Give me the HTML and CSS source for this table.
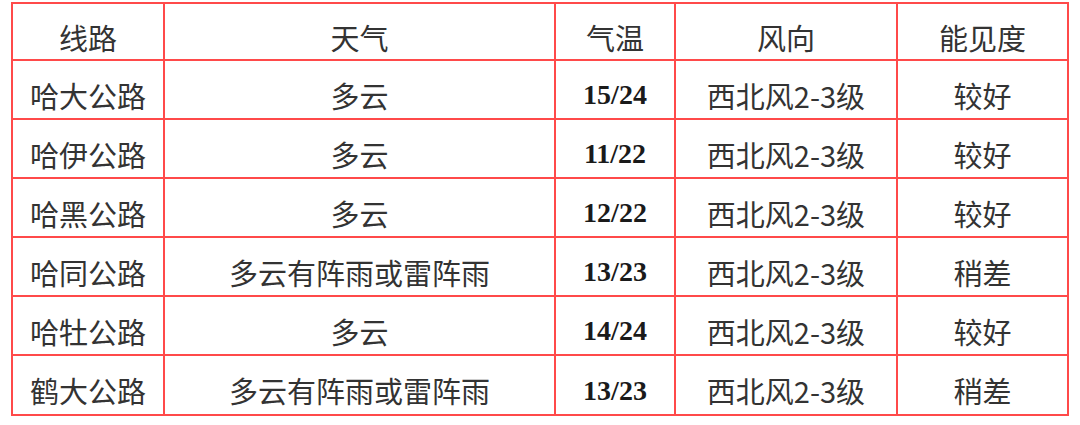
FILE: index.html
```html
<!DOCTYPE html>
<html lang="zh">
<head>
<meta charset="utf-8">
<link rel="stylesheet" href="styles.css">
</head>
<body>
<table class="weather">
  <colgroup>
    <col class="c1"><col class="c2"><col class="c3"><col class="c4"><col class="c5">
  </colgroup>
  <thead>
    <tr><th>线路</th><th>天气</th><th>气温</th><th>风向</th><th>能见度</th></tr>
  </thead>
  <tbody>
    <tr><td>哈大公路</td><td>多云</td><td class="num">15/24</td><td>西北风2-3级</td><td>较好</td></tr>
    <tr><td>哈伊公路</td><td>多云</td><td class="num">11/22</td><td>西北风2-3级</td><td>较好</td></tr>
    <tr><td>哈黑公路</td><td>多云</td><td class="num">12/22</td><td>西北风2-3级</td><td>较好</td></tr>
    <tr><td>哈同公路</td><td>多云有阵雨或雷阵雨</td><td class="num">13/23</td><td>西北风2-3级</td><td>稍差</td></tr>
    <tr><td>哈牡公路</td><td>多云</td><td class="num">14/24</td><td>西北风2-3级</td><td>较好</td></tr>
    <tr class="last"><td>鹤大公路</td><td>多云有阵雨或雷阵雨</td><td class="num">13/23</td><td>西北风2-3级</td><td>稍差</td></tr>
  </tbody>
</table>
</body>
</html>
```
FILE: styles.css
```css
html, body {
  margin: 0;
  padding: 0;
  background: #ffffff;
}
.weather {
  margin: 2px 0 0 11px;
  border-collapse: collapse;
  table-layout: fixed;
  width: 1058px;
  font-family: "Noto Sans CJK SC", "Noto Sans", sans-serif;
  font-size: 29px;
  font-weight: 400;
  color: #333333;
}
.c1 { width: 152px; }
.c2 { width: 391px; }
.c3 { width: 120px; }
.c4 { width: 222px; }
.c5 { width: 171px; }
.weather th,
.weather td {
  border: 2px solid #ff4a4a;
  height: 59px;
  padding: 11px 0 0 0;
  text-align: center;
  vertical-align: middle;
  font-weight: 400;
  line-height: 1;
  box-sizing: border-box;
}
.weather th {
  height: 57px;
}
.weather tr.last td {
  height: 60px;
}
.weather td.num {
  font-family: "Liberation Serif", "Times New Roman", serif;
  font-weight: 700;
  font-size: 28px;
  color: #1a1a1a;
}
```
